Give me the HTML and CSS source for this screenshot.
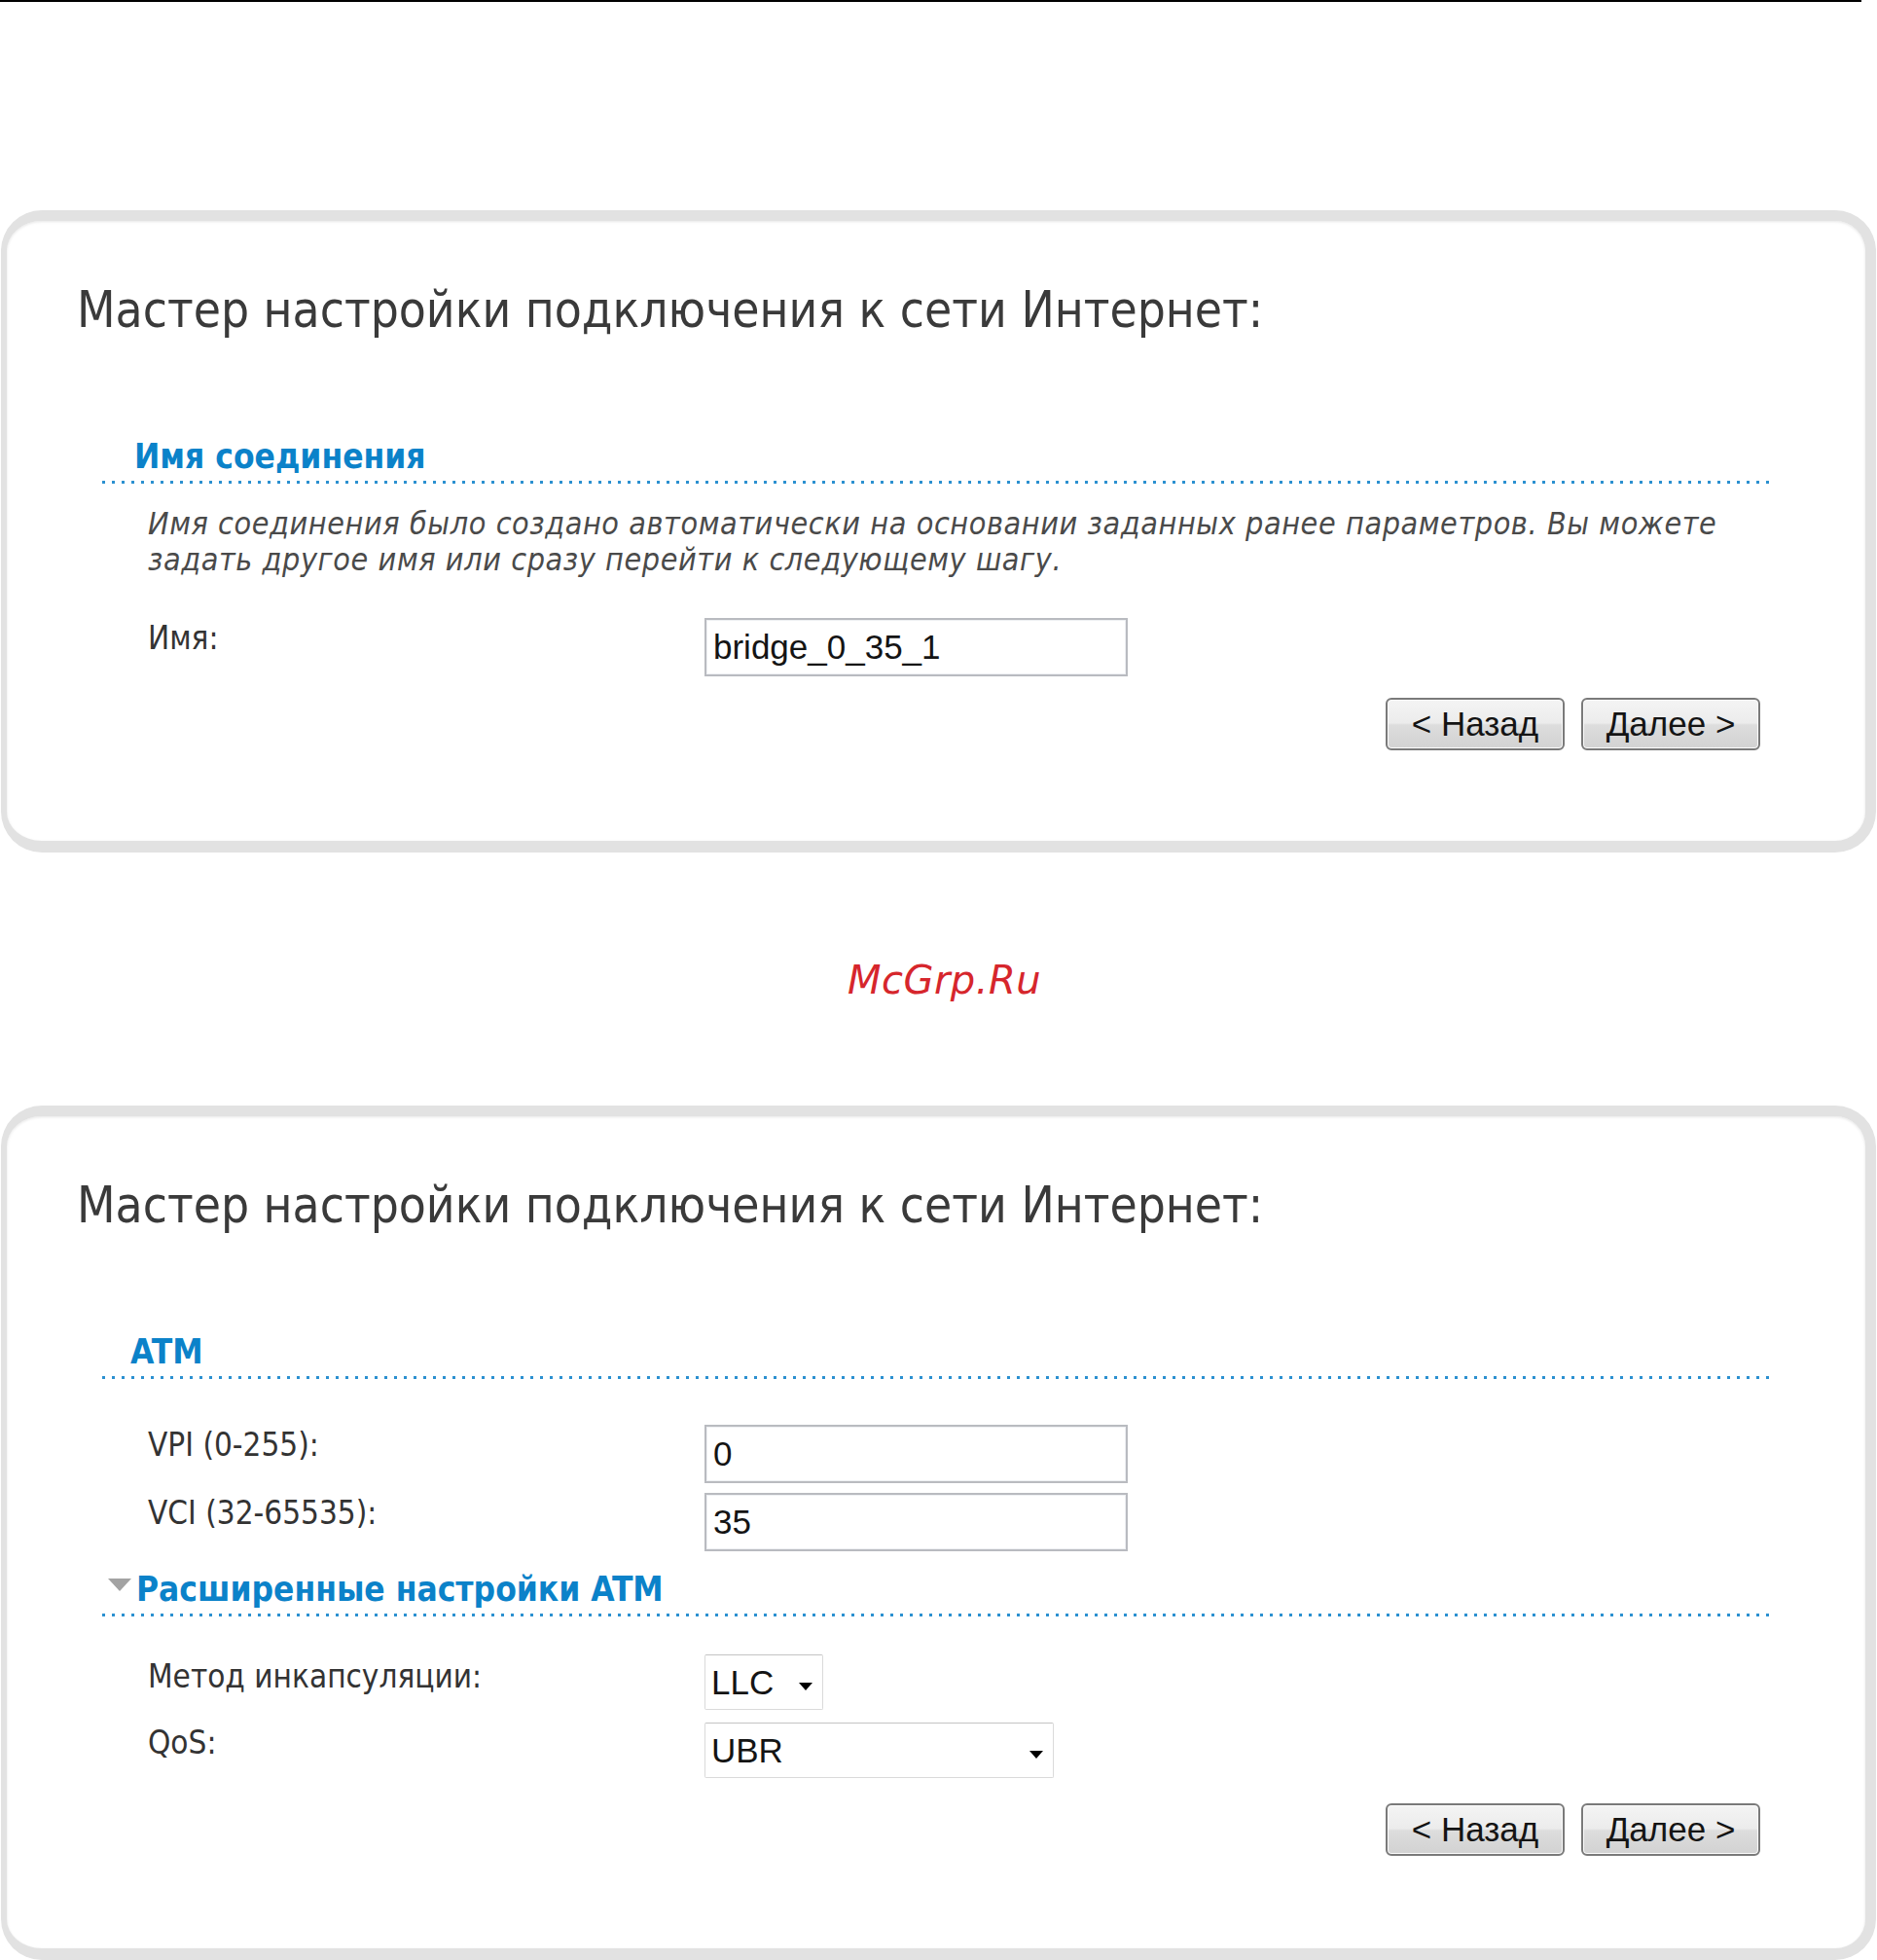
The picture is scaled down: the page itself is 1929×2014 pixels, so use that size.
FILE: index.html
```html
<!DOCTYPE html>
<html lang="ru">
<head>
<meta charset="utf-8">
<title>Мастер настройки подключения к сети Интернет</title>
<link rel="stylesheet" href="styles.css">
</head>
<body>
<div class="topline"></div>

<div class="card card-first">
  <h1 class="title">Мастер настройки подключения к сети Интернет:</h1>
  <div class="section">
    <h2 class="sec-head">Имя соединения</h2>
    <p class="note">Имя соединения было создано автоматически на основании заданных ранее параметров. Вы можете<br>задать другое имя или сразу перейти к следующему шагу.</p>
    <div class="row row-name">
      <div class="label">Имя:</div>
      <div class="field text-field">bridge_0_35_1</div>
    </div>
    <div class="buttons">
      <div class="btn">&lt; Назад</div>
      <div class="btn">Далее &gt;</div>
    </div>
  </div>
</div>

<div class="watermark">McGrp.Ru</div>

<div class="card card-second">
  <h1 class="title">Мастер настройки подключения к сети Интернет:</h1>
  <div class="section">
    <h2 class="sec-head sec-atm">ATM</h2>
    <div class="row row-vpi">
      <div class="label">VPI (0-255):</div>
      <div class="field text-field">0</div>
    </div>
    <div class="row row-vci">
      <div class="label">VCI (32-65535):</div>
      <div class="field text-field">35</div>
    </div>
    <h2 class="sec-head sec-adv"><span class="tri"></span>Расширенные настройки ATM</h2>
    <div class="row row-enc">
      <div class="label">Метод инкапсуляции:</div>
      <div class="field select select-llc">LLC<span class="arrow"></span></div>
    </div>
    <div class="row row-qos">
      <div class="label">QoS:</div>
      <div class="field select select-ubr">UBR<span class="arrow"></span></div>
    </div>
    <div class="buttons buttons-second">
      <div class="btn">&lt; Назад</div>
      <div class="btn">Далее &gt;</div>
    </div>
  </div>
</div>
</body>
</html>
```

FILE: styles.css
```css
* { box-sizing: border-box; }

html, body {
  margin: 0;
  padding: 0;
  background: #ffffff;
}

body {
  width: 1929px;
  font-family: "DejaVu Sans Condensed", "DejaVu Sans", sans-serif;
  color: #333333;
}

.topline {
  width: 1913px;
  height: 2px;
  background: #000000;
}

.card {
  margin: 214px 1px 0 1px;
  width: 1927px;
  border-style: solid;
  border-color: #e2e2e2;
  border-width: 11px 11px 12px 6px;
  border-radius: 42px;
  background: #ffffff;
  box-shadow: inset 0 1px 3px rgba(0, 0, 0, 0.10);
  padding: 62px 0 0 0;
}

.card-first {
  padding-bottom: 93px;
}

.card-second {
  margin-top: 104px;
  padding-bottom: 95px;
}

.title {
  margin: 0 0 0 72px;
  font-weight: normal;
  font-size: 51px;
  line-height: 60px;
  height: 60px;
  color: #3a3a3a;
  white-space: nowrap;
}

.section {
  margin: 100px 0 0 98px;
  width: 1713px;
}

.sec-head {
  margin: 0;
  padding: 0 0 8px 33px;
  font-size: 35px;
  line-height: 40px;
  font-weight: bold;
  color: #0b82c9;
  background-image: repeating-linear-gradient(to right, #2b90d0 0, #2b90d0 3px, transparent 3px, transparent 10px);
  background-size: 100% 3px;
  background-repeat: no-repeat;
  background-position: left bottom;
  display: flex;
  align-items: center;
  white-space: nowrap;
}

.sec-atm {
  padding-left: 29px;
}

.sec-adv {
  margin-top: 19px;
  padding-left: 6px;
}

.tri {
  display: inline-block;
  width: 0;
  height: 0;
  border-left: 12px solid transparent;
  border-right: 12px solid transparent;
  border-top: 13px solid #a3a3a3;
  margin: 0 5px 0 0;
  position: relative;
  top: -5px;
}

.note {
  margin: 23px 0 0 47px;
  font-size: 32px;
  letter-spacing: 0.6px;
  line-height: 37px;
  font-style: italic;
  color: #4a4a4a;
  white-space: nowrap;
}

.row {
  display: flex;
  align-items: flex-start;
  padding-left: 47px;
}

.label {
  width: 572px;
  flex: none;
  font-size: 33px;
  line-height: 36px;
  padding-top: 3px;
  color: #333333;
  white-space: nowrap;
}

.row-name { margin-top: 41px; }
.row-vpi { margin-top: 47px; }
.row-vci { margin-top: 10px; }
.row-enc { margin-top: 39px; }
.row-qos { margin-top: 13px; }

.row-enc .label { padding-top: 5px; }
.row-qos .label { padding-top: 3px; }

.field {
  flex: none;
  font-family: "Liberation Sans", Arial, sans-serif;
  font-size: 35px;
  color: #141414;
}

.text-field {
  width: 435px;
  height: 60px;
  border: 2px solid #b9bbc0;
  box-shadow: inset 0 0 0 1px #eef0f3;
  line-height: 56px;
  padding-left: 7px;
  background: #ffffff;
}

.select {
  position: relative;
  height: 57px;
  border: 1px solid #dadada;
  border-top-color: #c4c4c4;
  border-radius: 2px;
  line-height: 55px;
  padding-left: 6px;
  background: #ffffff;
}

.select-llc { width: 122px; }
.select-ubr { width: 359px; }

.arrow {
  position: absolute;
  right: 10px;
  top: 28px;
  width: 0;
  height: 0;
  border-left: 7px solid transparent;
  border-right: 7px solid transparent;
  border-top: 8px solid #000000;
}

.buttons {
  display: flex;
  justify-content: flex-end;
  gap: 17px;
  padding-right: 9px;
  margin-top: 22px;
}

.buttons-second {
  margin-top: 26px;
}

.btn {
  width: 184px;
  height: 54px;
  border: 2px solid #7a7a7a;
  border-radius: 6px;
  background: linear-gradient(to bottom, #f4f4f4 0%, #ececec 48%, #dddddd 52%, #d2d2d2 100%);
  box-shadow: inset 0 0 0 1px #fbfbfb;
  font-family: "Liberation Sans", Arial, sans-serif;
  font-size: 35px;
  line-height: 50px;
  text-align: center;
  color: #141414;
}

.watermark {
  margin-top: 106px;
  height: 50px;
  line-height: 50px;
  text-align: center;
  font-family: "DejaVu Sans", sans-serif;
  font-style: italic;
  font-size: 40px;
  letter-spacing: 0.5px;
  color: #d6262c;
  padding-left: 12px;
}
```
